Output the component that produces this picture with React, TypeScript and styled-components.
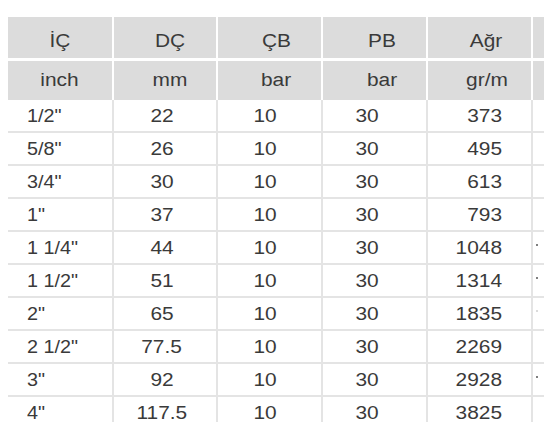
import React from "react";
import styled, { createGlobalStyle } from "styled-components";

const Global = createGlobalStyle`
  html, body { margin: 0; padding: 0; background: #ffffff; }
  body { font-family: "Liberation Sans", Arial, sans-serif; }
`;

const COLS = "104px 102px 103px 103px 103px 11px";
const LINE = "#e4e4e4";

const Page = styled.div`
  padding: 17px 0 0 8px;
  width: 546px;
  box-sizing: border-box;
`;

const Table = styled.div`
  width: 536px;
  height: 405px;
  overflow: hidden;
  display: flex;
  flex-direction: column;
  color: #3a3a3a;
  font-size: 18px;
`;

const HeadRow = styled.div<{ $h: number; $gapBelow: number; $textTop: number }>`
  display: grid;
  grid-template-columns: ${COLS};
  column-gap: 2px;
  background: #ffffff;
  margin-bottom: ${(p) => p.$gapBelow}px;
  height: ${(p) => p.$h}px;
  flex-shrink: 0;
  & > div {
    padding-top: ${(p) => p.$textTop}px;
  }
`;

const HeadCell = styled.div<{ $shift: number }>`
  background: #dcdcdc;
  display: flex;
  align-items: center;
  justify-content: center;
  padding-left: ${(p) => Math.max(0, p.$shift * 2)}px;
  padding-right: ${(p) => Math.max(0, -p.$shift * 2)}px;
  box-sizing: border-box;
`;

const DataRow = styled.div`
  display: grid;
  grid-template-columns: ${COLS};
  column-gap: 2px;
  background: ${LINE};
  border-bottom: 2px solid ${LINE};
  height: 31px;
  flex-shrink: 0;
`;

const DataCell = styled.div<{ $align: "left" | "center" | "right"; $pad: number }>`
  background: #ffffff;
  display: flex;
  align-items: center;
  justify-content: ${(p) =>
    p.$align === "left" ? "flex-start" : p.$align === "right" ? "flex-end" : "center"};
  padding-left: ${(p) => (p.$align === "left" ? p.$pad : p.$align === "center" ? Math.max(0, p.$pad * 2) : 0)}px;
  padding-right: ${(p) => (p.$align === "right" ? p.$pad : p.$align === "center" ? Math.max(0, -p.$pad * 2) : 0)}px;
  box-sizing: border-box;
  padding-top: 2px;
`;

const Text = styled.span<{ $origin: "left" | "center" | "right" }>`
  display: inline-block;
  white-space: pre;
  transform: scaleX(${(p) => (p.$origin === "left" ? 1.1 : 1.16)});
  transform-origin: ${(p) => p.$origin} center;
`;

const EdgeCell = styled.div`
  background: #ffffff;
  position: relative;
`;

const Dot = styled.span<{ $faint?: boolean }>`
  position: absolute;
  left: 3px;
  top: 12px;
  width: 2px;
  height: 2px;
  border-radius: 1px;
  background: ${(p) => (p.$faint ? "#cfcfcf" : "#555555")};
`;

const headShift = [0, 5, 7, 8, 7];
const dataCfg: { align: "left" | "center" | "right"; pad: number }[] = [
  { align: "left", pad: 19 },
  { align: "center", pad: -3 },
  { align: "center", pad: -4 },
  { align: "center", pad: -7 },
  { align: "right", pad: 29 },
];

const head1 = ["İÇ", "DÇ", "ÇB", "PB", "Ağr"];
const head2 = ["inch", "mm", "bar", "bar", "gr/m"];

type Row = { v: string[]; dot?: "dark" | "faint" };
const rows: Row[] = [
  { v: ["1/2\"", "22", "10", "30", "373"] },
  { v: ["5/8\"", "26", "10", "30", "495"] },
  { v: ["3/4\"", "30", "10", "30", "613"] },
  { v: ["1\"", "37", "10", "30", "793"] },
  { v: ["1 1/4\"", "44", "10", "30", "1048"], dot: "dark" },
  { v: ["1 1/2\"", "51", "10", "30", "1314"], dot: "dark" },
  { v: ["2\"", "65", "10", "30", "1835"], dot: "faint" },
  { v: ["2 1/2\"", "77.5", "10", "30", "2269"] },
  { v: ["3\"", "92", "10", "30", "2928"], dot: "dark" },
  { v: ["4\"", "117.5", "10", "30", "3825"] },
];

export default function App() {
  return (
    <>
      <Global />
      <Page>
        <Table>
          <HeadRow $h={41} $gapBelow={3} $textTop={7}>
            {head1.map((t, i) => (
              <HeadCell key={i} $shift={headShift[i]}>
                <Text $origin="center">{t}</Text>
              </HeadCell>
            ))}
            <HeadCell $shift={0} />
          </HeadRow>
          <HeadRow $h={39} $gapBelow={0} $textTop={0}>
            {head2.map((t, i) => (
              <HeadCell key={i} $shift={headShift[i]}>
                <Text $origin="center">{t}</Text>
              </HeadCell>
            ))}
            <HeadCell $shift={0} />
          </HeadRow>
          {rows.map((r, ri) => (
            <DataRow key={ri}>
              {r.v.map((t, i) => (
                <DataCell key={i} $align={dataCfg[i].align} $pad={dataCfg[i].pad}>
                  <Text $origin={dataCfg[i].align}>{t}</Text>
                </DataCell>
              ))}
              <EdgeCell>{r.dot && <Dot $faint={r.dot === "faint"} />}</EdgeCell>
            </DataRow>
          ))}
        </Table>
      </Page>
    </>
  );
}
